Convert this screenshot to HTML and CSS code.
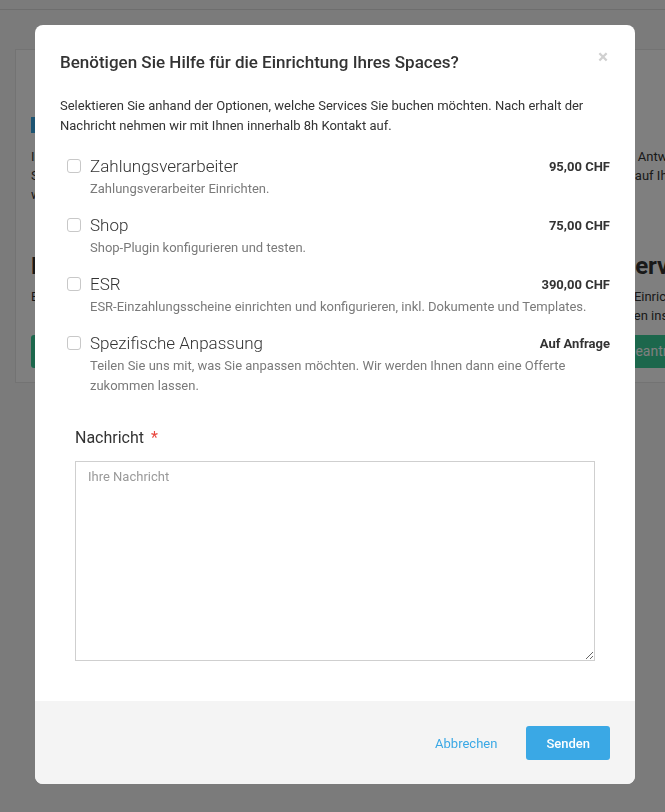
FILE: index.html
```html
<!DOCTYPE html>
<html>
<head>
  <title>Space einrichten</title>
  <link rel="stylesheet" href="styles.css">
</head>
<body>
  <div class="topbar"></div>

  <div class="card">
    <div class="card-col">
      <div class="badge"></div>
      <p class="card-text">Im Anschluss an Ihre Anfrage melden wir uns.<br>Sie erhalten von uns eine detaillierte Offerte,<br>wie Sie Ihren Space optimal nutzen.</p>
      <h2 class="card-title">Kontakt</h2>
      <p class="card-text">Erhalten Sie eine unverbindliche Beratung.</p>
      <a class="btn-green">Kontakt aufnehmen</a>
    </div>
    <div class="card-col">
      <div class="badge"></div>
      <p class="card-text">Bei Fragen hilft unser Team gern. Sie erhalten eine Antwort<br>innerhalb eines Arbeitstages direkt und per E-Mail auf Ihre Adresse.</p>
      <h2 class="card-title">Einrichtung als Komplett-Service</h2>
      <p class="card-text">Wir unterstützen Sie gerne und kompetent bei der Einrichtung<br>Ihres Spaces und richten alle gewünschten Optionen ins Backend ein.</p>
      <a class="btn-green btn-wide">Jetzt unverbindlich Einrichtungs-Service beantragen</a>
    </div>
  </div>

  <div class="backdrop">
    <div class="modal">
      <div class="modal-body">
        <div class="modal-header">
          <h3 class="modal-title">Benötigen Sie Hilfe für die Einrichtung Ihres Spaces?</h3>
          <span class="close">&times;</span>
        </div>
        <p class="intro">Selektieren Sie anhand der Optionen, welche Services Sie buchen möchten. Nach erhalt der Nachricht nehmen wir mit Ihnen innerhalb 8h Kontakt auf.</p>

        <ul class="options">
          <li class="option">
            <label class="option-row">
              <input type="checkbox" class="check">
              <span class="option-name">Zahlungsverarbeiter</span>
              <span class="option-price">95,00 CHF</span>
            </label>
            <p class="option-desc">Zahlungsverarbeiter Einrichten.</p>
          </li>
          <li class="option">
            <label class="option-row">
              <input type="checkbox" class="check">
              <span class="option-name">Shop</span>
              <span class="option-price">75,00 CHF</span>
            </label>
            <p class="option-desc">Shop-Plugin konfigurieren und testen.</p>
          </li>
          <li class="option">
            <label class="option-row">
              <input type="checkbox" class="check">
              <span class="option-name">ESR</span>
              <span class="option-price">390,00 CHF</span>
            </label>
            <p class="option-desc">ESR-Einzahlungsscheine einrichten und konfigurieren, inkl. Dokumente und Templates.</p>
          </li>
          <li class="option">
            <label class="option-row">
              <input type="checkbox" class="check">
              <span class="option-name">Spezifische Anpassung</span>
              <span class="option-price">Auf Anfrage</span>
            </label>
            <p class="option-desc">Teilen Sie uns mit, was Sie anpassen möchten. Wir werden Ihnen dann eine Offerte zukommen lassen.</p>
          </li>
        </ul>

        <div class="form-group">
          <label class="form-label" for="message">Nachricht <span class="required">*</span></label>
          <textarea id="message" class="form-input" placeholder="Ihre Nachricht"></textarea>
        </div>
      </div>

      <div class="modal-footer">
        <a class="btn-link">Abbrechen</a>
        <button class="btn-primary">Senden</button>
      </div>
    </div>
  </div>
</body>
</html>
```

FILE: styles.css
```css
body {
  margin: 0;
  font-family: Roboto, "Liberation Sans", sans-serif;
  background-color: #f6f6f6;
  color: #333;
  overflow: hidden;
  height: 812px;
}

/* page behind the dialog */

.topbar {
  height: 9px;
  border-bottom: 1px solid #dcdcdc;
}

.card {
  margin: 39px 0 0 15px;
  width: 760px;
  background-color: #fff;
  border: 1px solid #e6e6e6;
  padding: 67px 15px 14px;
  display: grid;
  grid-template-columns: 300px 1fr;
  column-gap: 15px;
  box-sizing: border-box;
}

.card-col {
  display: flex;
  flex-direction: column;
  align-items: flex-start;
  white-space: nowrap;
  overflow: hidden;
}

.badge {
  width: 40px;
  height: 16px;
  background-color: #3aa8e5;
  margin-bottom: 14px;
}

.card-text {
  margin: 0;
  font-size: 13px;
  line-height: 19px;
  min-height: 57px;
}

.card-title {
  margin: 47px 0 6px;
  font-size: 24px;
  line-height: 30px;
  font-weight: 700;
}

.card-title + .card-text {
  min-height: 38px;
}

.btn-green {
  margin-top: 10px;
  height: 33px;
  line-height: 33px;
  padding: 0 20px;
  border-radius: 3px;
  background-color: #38cf99;
  color: #fff;
  font-size: 14px;
}

.btn-wide {
  padding: 0 30px;
}

/* dialog */

.backdrop {
  position: fixed;
  inset: 0;
  background-color: rgba(0, 0, 0, 0.5);
  display: flex;
  align-items: flex-start;
  padding: 25px 0 0 35px;
}

.modal {
  width: 600px;
  background-color: #fff;
  border-radius: 8px;
  overflow: hidden;
}

.modal-body {
  padding: 25px 25px 40px;
}

.modal-header {
  display: flex;
  justify-content: space-between;
  align-items: flex-start;
}

.modal-title {
  margin: 0;
  font-size: 17px;
  line-height: 24px;
  font-weight: 500;
  color: #333;
}

.close {
  font-size: 19px;
  line-height: 20px;
  font-weight: 700;
  color: #d0d0d0;
  margin: -3px 2px 0 0;
}

.intro {
  margin: 22px 0 0;
  font-size: 13px;
  line-height: 20px;
}

.options {
  list-style: none;
  margin: 19px 0 0;
  padding: 0;
}

.option {
  margin-bottom: 15px;
}

.option-row {
  display: flex;
  align-items: center;
  height: 22px;
}

.check {
  appearance: none;
  width: 14px;
  height: 14px;
  margin: 0 9px 0 7px;
  border: 1px solid #c8c8c8;
  border-radius: 3px;
  background-color: #fff;
}

.option-name {
  font-size: 17px;
  line-height: 22px;
  font-weight: 300;
  color: #333;
}

.option-price {
  margin-left: auto;
  font-size: 13px;
  font-weight: 700;
  color: #333;
}

.option-desc {
  margin: 2px 0 0;
  padding: 0 22px 0 30px;
  font-size: 13px;
  line-height: 20px;
  color: #7a7a7a;
}

.form-group {
  margin-top: 32px;
  padding: 0 15px;
}

.form-label {
  display: block;
  margin-bottom: 13px;
  font-size: 16px;
  line-height: 20px;
  color: #333;
}

.required {
  color: #e8473f;
  margin-left: 3px;
}

.form-input {
  display: block;
  width: 100%;
  height: 200px;
  box-sizing: border-box;
  border: 1px solid #cfcfcf;
  padding: 6px 12px;
  font-family: Roboto, "Liberation Sans", sans-serif;
  font-size: 13px;
  line-height: 18px;
  color: #333;
}

.form-input::placeholder {
  color: #9a9a9a;
}

.modal-footer {
  background-color: #f4f4f4;
  padding: 25px 25px 24px;
  display: flex;
  justify-content: flex-end;
  align-items: center;
}

.btn-link {
  font-size: 13px;
  color: #3aa8e5;
  margin-right: 29px;
}

.btn-primary {
  height: 34px;
  padding: 0 20px;
  border: none;
  border-radius: 3px;
  background-color: #3aa8e5;
  color: #fff;
  font-family: Roboto, "Liberation Sans", sans-serif;
  font-size: 13px;
  font-weight: 500;
}
```
